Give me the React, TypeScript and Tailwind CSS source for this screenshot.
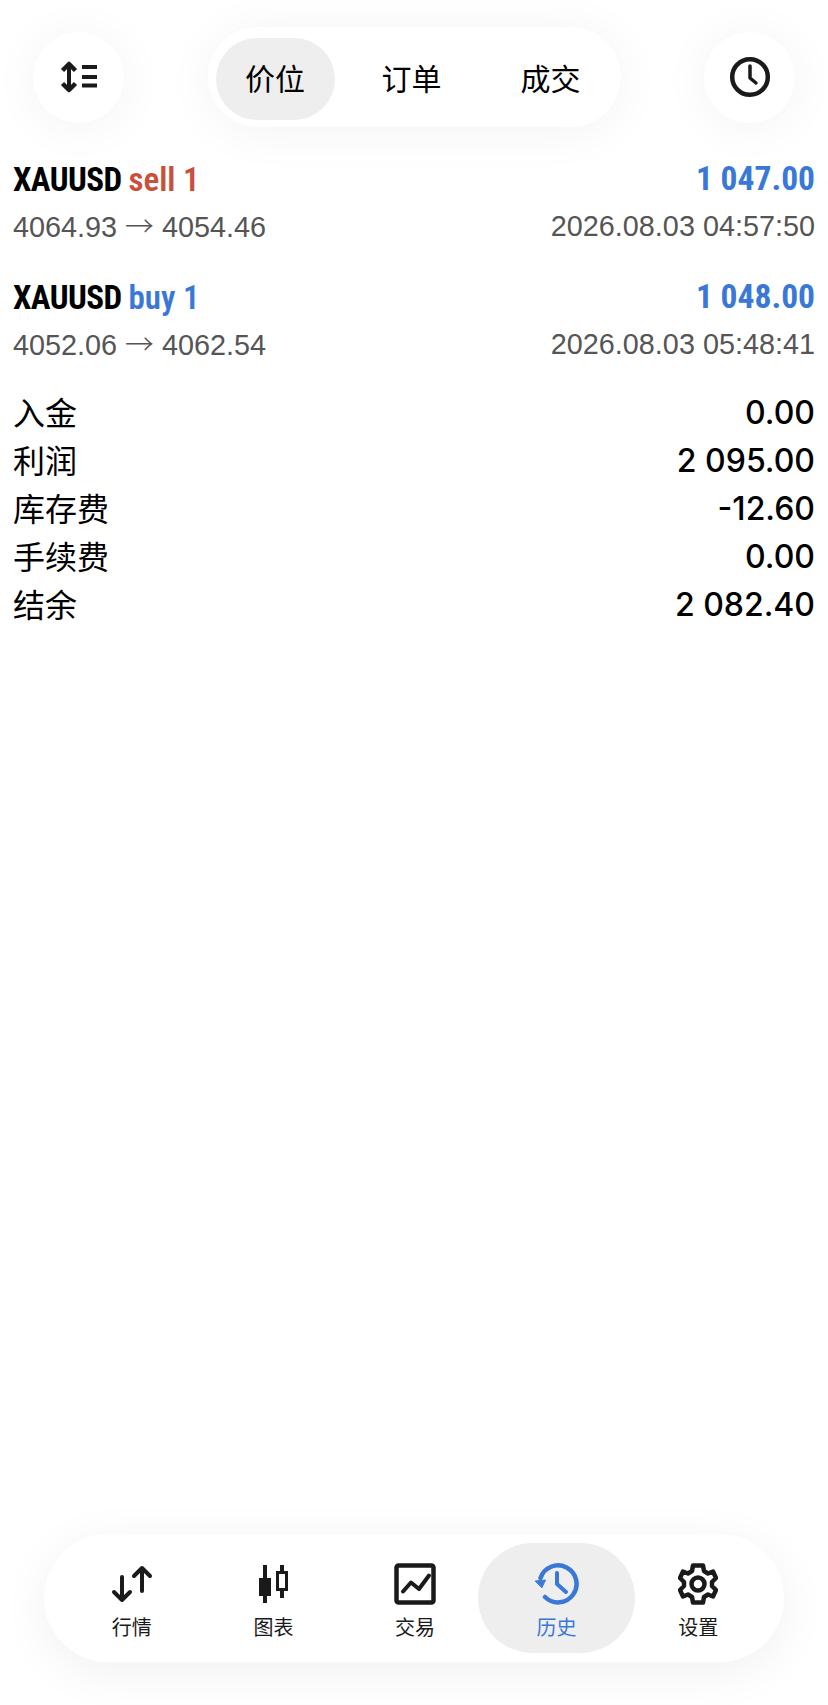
import type { ReactNode } from 'react';

const rows = [
  { side: 'sell 1', sideColor: 'text-[#c8503c]', profit: '1 047.00', from: '4064.93', to: '4054.46', time: '2026.08.03 04:57:50' },
  { side: 'buy 1', sideColor: 'text-[#3a78d8]', profit: '1 048.00', from: '4052.06', to: '4062.54', time: '2026.08.03 05:48:41' },
];

const summary = [
  ['入金', '0.00'],
  ['利润', '2 095.00'],
  ['库存费', '-12.60'],
  ['手续费', '0.00'],
  ['结余', '2 082.40'],
];

function SortIcon() {
  return (
    <svg className="ml-px" width="38" height="32" viewBox="0 0 38 32" fill="none" stroke="#1a1a1a" strokeWidth="4" strokeLinejoin="round">
      <path d="M9 3 V29" />
      <path d="M2.5 9.5 L9 3 L15.5 9.5 M2.5 22.5 L9 29 L15.5 22.5" strokeWidth="4.5" />
      <path d="M22 6 H37 M22 16 H37 M22 24.5 H37" />
    </svg>
  );
}

function ClockIcon() {
  return (
    <svg width="42" height="42" viewBox="0 0 42 42" fill="none" stroke="#1a1a1a" strokeWidth="4.5" strokeLinecap="round" strokeLinejoin="round">
      <circle cx="21" cy="21" r="17.8" />
      <path d="M21 10 V22 L27 27" strokeWidth="3.5" />
    </svg>
  );
}

function QuotesIcon() {
  return (
    <svg width="42" height="38" viewBox="0 0 42 38" fill="none" stroke="#1a1a1a" strokeWidth="4" strokeLinecap="round" strokeLinejoin="round">
      <path d="M11 12 V35 M3 27 L11 35 L19 27" />
      <path d="M31 3 V26 M23 11 L31 3 L39 11" />
    </svg>
  );
}

function ChartIcon() {
  return (
    <svg width="32" height="38" viewBox="0 0 32 38" fill="none" stroke="#1a1a1a">
      <path d="M8 0 V38" strokeWidth="4" />
      <rect x="2" y="13" width="12" height="18" fill="#1a1a1a" strokeWidth="0" />
      <path d="M25 0 V33" strokeWidth="4" />
      <rect x="20.5" y="7.5" width="9" height="17" fill="#fff" strokeWidth="3" />
    </svg>
  );
}

function TradeIcon() {
  return (
    <svg width="42" height="42" viewBox="0 0 42 42" fill="none" stroke="#1a1a1a" strokeWidth="4.5" strokeLinejoin="round">
      <rect x="2.5" y="2.5" width="37" height="37" rx="2" />
      <path d="M9 28.5 L17 19.5 L25 26 L35 12.5" strokeWidth="4" strokeLinecap="round" />
    </svg>
  );
}

function HistoryIcon() {
  return (
    <svg width="46" height="42" viewBox="0 0 46 42" fill="none" stroke="#3a78d8" strokeWidth="4.5" strokeLinecap="round" strokeLinejoin="round">
      <path d="M6.5 15 A18.5 18.5 0 1 1 11 34" />
      <path d="M1.5 18 L11.5 17 L8 24.5 Z" fill="#3a78d8" strokeWidth="1" />
      <path d="M23 10 V21 L32 29" strokeWidth="4" />
    </svg>
  );
}

function GearIcon() {
  return (
    <svg width="40" height="42" viewBox="0 0 40 42" fill="none" stroke="#1a1a1a" strokeWidth="4.5" strokeLinejoin="round">
      <path d="M15 2.5 H25 L26 8 L30 10.5 L35 8.5 L38 15 L34 19 V23 L38 27 L35 33.5 L30 31.5 L26 34 L25 39.5 H15 L14 34 L10 31.5 L5 33.5 L2 27 L6 23 V19 L2 15 L5 8.5 L10 10.5 L14 8 Z" />
      <circle cx="20" cy="21" r="6.5" />
    </svg>
  );
}

function NavItem({ label, icon, active }: { label: string; icon: ReactNode; active?: boolean }) {
  return (
    <div className={`flex h-[110px] flex-col items-center rounded-[55px] pt-[20px] ${active ? '-mx-2 bg-[#eeeeee] text-[#3a78d8]' : 'text-[#1a1a1a]'}`}>
      <div className="flex h-[42px] items-center justify-center">{icon}</div>
      <span className="mt-[8px] text-[20px] leading-[28px]">{label}</span>
    </div>
  );
}

export default function App() {
  return (
    <div className="flex h-[1705px] w-[828px] flex-col overflow-hidden bg-white font-['Noto_Sans_CJK_SC',sans-serif] text-black">
      <header className="flex items-center justify-between px-[33px] pt-[27px]">
        <div className="flex h-[91px] w-[91px] items-center justify-center rounded-full bg-white shadow-[0_4px_50px_rgba(0,0,0,0.05)]">
          <SortIcon />
        </div>
        <div className="flex h-[100px] items-center rounded-[50px] bg-white px-2 text-[30px] shadow-[0_4px_50px_rgba(0,0,0,0.05)]">
          <div className="mt-1 flex h-[82px] w-[119px] items-center justify-center rounded-[41px] bg-[#eeeeee] pb-1">价位</div>
          <div className="flex h-[82px] w-[154px] items-center justify-center">订单</div>
          <div className="flex h-[82px] w-[124px] items-center justify-center">成交</div>
        </div>
        <div className="flex h-[91px] w-[91px] items-center justify-center rounded-full bg-white shadow-[0_4px_50px_rgba(0,0,0,0.05)]">
          <ClockIcon />
        </div>
      </header>

      <section className="mt-[29px] flex flex-col gap-[24px] px-[13px]">
        {rows.map((row) => (
          <div key={row.time}>
            <div className="flex h-[47px] items-center justify-between">
              <span className="font-['Roboto',sans-serif] text-[33px] font-bold tracking-[-0.6px] [font-stretch:75%]">
                XAUUSD <span className={`font-semibold tracking-normal ${row.sideColor}`}>{row.side}</span>
              </span>
              <span className="font-['Roboto',sans-serif] text-[33.5px] font-bold text-[#3a78d8] [font-stretch:87%]">{row.profit}</span>
            </div>
            <div className="flex h-[47px] items-center justify-between font-['Liberation_Sans',sans-serif] text-[28.8px] text-[#555555]">
              <span>
                {row.from} <span className="font-['Noto_Sans_CJK_SC',sans-serif] font-light">→</span> {row.to}
              </span>
              <span>{row.time}</span>
            </div>
          </div>
        ))}
      </section>

      <section className="mt-[21px] flex flex-col px-[13px]">
        {summary.map(([label, value]) => (
          <div key={label} className="flex h-[48px] items-center justify-between text-[32px]">
            <span className="mb-[5px]">{label}</span>
            <span className="font-['Inter',sans-serif] text-[32px] font-medium">{value}</span>
          </div>
        ))}
      </section>

      <nav className="mb-[43px] ml-[44px] mt-auto grid h-[128px] w-[740px] grid-cols-5 items-center rounded-[64px] bg-white pl-[17px] pr-[15px] shadow-[0_10px_50px_rgba(0,0,0,0.06)]">
        <NavItem label="行情" icon={<QuotesIcon />} />
        <NavItem label="图表" icon={<ChartIcon />} />
        <NavItem label="交易" icon={<TradeIcon />} />
        <NavItem label="历史" icon={<HistoryIcon />} active />
        <NavItem label="设置" icon={<GearIcon />} />
      </nav>
    </div>
  );
}
